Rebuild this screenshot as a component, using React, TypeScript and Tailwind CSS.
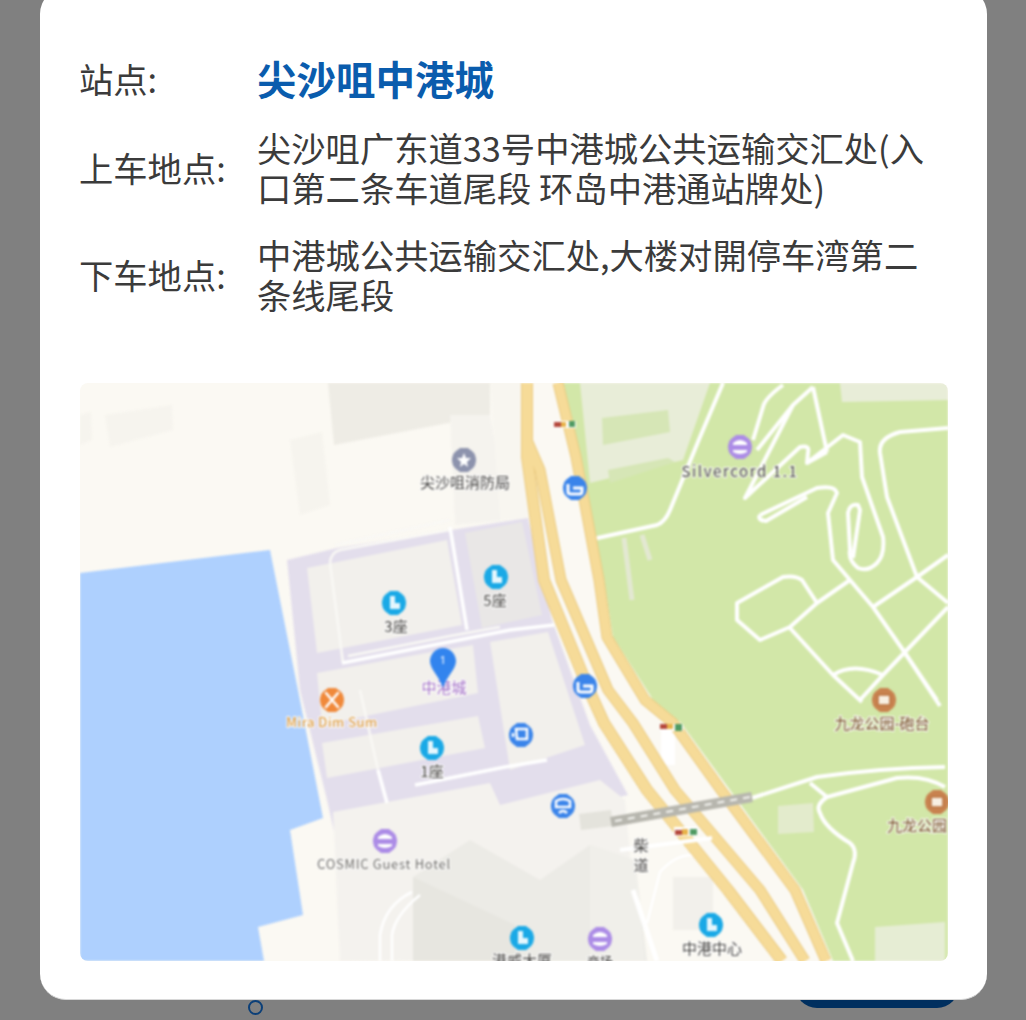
const cjk = "font-['Noto_Sans_CJK_SC','Noto_Sans',sans-serif]";

const rows = [
  {
    label: "上车地点:",
    value: "尖沙咀广东道33号中港城公共运输交汇处(入口第二条车道尾段 环岛中港通站牌处)",
  },
  {
    label: "下车地点:",
    value: "中港城公共运输交汇处,大楼对開停车湾第二条线尾段",
  },
];

const parkPaths = [
  "M723 383 L700 437 L670 510 Q665 522 657 525 L593 539",
  "M783 385 Q765 398 763 407 L753 440",
  "M813 387 L827 452",
  "M813 387 L793 405 L757 450",
  "M793 405 L745 498 L800 447 Q810 445 808 452 L807 463 L843 435 L860 442 L862 477 L883 537 Q885 555 877 563 Q868 572 858 568 Q848 560 850 550 L848 513 Q850 503 858 505 L860 510 L853 558",
  "M760 515 L817 488 Q835 485 837 493 L828 513 L833 560 L873 607 L903 650 L937 700",
  "M760 515 Q757 520 766 521 L807 497",
  "M827 452 L807 463",
  "M948 555 L917 577 L873 607",
  "M917 577 L948 603",
  "M948 607 L883 675 L860 700",
  "M948 428 L900 432 Q878 438 880 453 L887 497 L917 577",
  "M850 580 L817 603 L790 627 L760 640 L737 620 L737 603 L783 577 Q795 575 802 580 L817 603",
  "M790 628 L833 675 L862 702",
  "M833 675 Q853 662 883 675",
  "M903 650 L940 706",
  "M945 767 Q880 768 817 777 L752 798",
  "M945 787 Q925 775 897 778 L827 797 L810 783",
  "M827 797 Q815 805 820 813 Q825 828 850 843 Q858 850 853 863 L837 923 L853 961",
];

const buildingRoads = [
  "M342 663 L510 630 L554 625",
  "M450 527 L467 630",
  "M378 770 L387 803",
  "M415 785 L505 767 L547 760",
];

const paleRoads = [
  "M348 656 L450 636 L500 627",
  "M330 563 Q331 552 340 550 L450 530",
  "M330 563 L343 663",
  "M360 690 L378 770",
  "M335 545 L450 520",
];

const bands = [
  { d: "M527 383 L527 457 L544 580 L589 690 L604 723 L647 790 L728 890 L782 961", w: 11 },
  { d: "M527 440 L540 470 L561 580 L608 690 L633 723 L675 790 L760 890 L805 961", w: 10 },
  { d: "M558 383 L576 457 L599 580 L607 637 L645 700 L673 723 L721 790 L795 890 L826 961", w: 10 },
];

function Poi({
  x,
  y,
  fill,
  kind,
}: {
  x: number;
  y: number;
  fill: string;
  kind: "mall" | "bus" | "coach" | "hotel" | "metro" | "food" | "star" | "park";
}) {
  return (
    <g transform={`translate(${x} ${y})`}>
      <polygon
        points="-4,-12 4,-12 11,-5 11,5 4,12 -4,12 -11,5 -11,-5"
        fill={fill}
      />
      <circle r="12" fill={fill} />
      {kind === "mall" && (
        <path d="M-4 -7 H1 V0 H6 V6 H-4 Z" fill="#e4f6fd" />
      )}
      {kind === "bus" && (
        <path
          d="M-7 -4 V4 Q-7 6 -4 6 H5 Q7 6 7 3 V0 H-2"
          fill="none"
          stroke="#fff"
          strokeWidth="3"
        />
      )}
      {kind === "coach" && (
        <path
          d="M-5 -6 H6 V4 H-4 Z M-8 -2 V2"
          fill="none"
          stroke="#fff"
          strokeWidth="2.5"
        />
      )}
      {kind === "metro" && (
        <path
          d="M-7 -5 Q0 -9 7 -5 V1 H-7 Z M-4 7 Q0 3 4 7"
          fill="none"
          stroke="#fff"
          strokeWidth="2.5"
        />
      )}
      {kind === "hotel" && (
        <path
          d="M-7 -4 Q0 -10 7 -4 V-2 H-7 Z M-7 3 H7 V5 Q0 9 -7 5 Z"
          fill="#fff"
        />
      )}
      {kind === "food" && (
        <path
          d="M-6 -7 L6 7 M6 -7 L-6 7"
          stroke="#fff"
          strokeWidth="2.5"
          strokeLinecap="round"
        />
      )}
      {kind === "star" && (
        <polygon points="0,-7 2,-2 7,-2 3,2 4,7 0,4 -4,7 -3,2 -7,-2 -2,-2" fill="#fff" />
      )}
      {kind === "park" && (
        <rect x="-6" y="-5" width="12" height="10" rx="1" fill="#f8efe2" stroke="#b9733f" strokeWidth="1.5" />
      )}
    </g>
  );
}

function MapLabel({
  x,
  y,
  size = 15,
  fill = "#3f3d3a",
  children,
  spacing,
}: {
  x: number;
  y: number;
  size?: number;
  fill?: string;
  children: string;
  spacing?: number;
}) {
  return (
    <text
      x={x}
      y={y}
      fontSize={size}
      fill={fill}
      textAnchor="middle"
      letterSpacing={spacing}
      fontFamily="'Noto Sans CJK SC', 'Noto Sans', sans-serif"
      stroke="#ffffff"
      strokeWidth="2"
      paintOrder="stroke"
    >
      {children}
    </text>
  );
}

function MapView() {
  return (
    <svg
      viewBox="80 383 868 578"
      className="block w-[868px] h-[578px] rounded-lg bg-[#fbf9f3]"
    >
      <g className="blur-[0.8px]">
        {/* pale blocks, top left */}
        <polygon points="105,415 172,405 173,430 110,447" fill="#f6f4ee" />
        <polygon points="80,415 91,412 92,440 80,445" fill="#f6f4ee" />
        <polygon points="290,440 322,432 330,505 300,515" fill="#f6f4ee" />
        <polygon points="328,383 490,383 490,415 334,445" fill="#eeece5" />
        <polygon points="450,415 490,415 510,520 455,525" fill="#f5f3ee" />
        <polygon points="490,383 525,383 530,520 500,520" fill="#f8f6f0" />

        {/* water */}
        <polygon
          points="80,573 270,550 298,690 323,818 290,830 303,915 258,927 264,961 80,961"
          fill="#aed0fe"
        />

        {/* mall */}
        <polygon
          points="287,560 337,548 528,518 552,620 590,725 628,795 510,822 340,858 327,800 300,690"
          fill="#e3deec"
        />
        <polygon points="307,568 447,540 462,625 317,653" fill="#f2f0ec" />
        <polygon points="465,533 522,522 542,615 482,628" fill="#e9e7e6" />
        <polygon points="317,673 432,652 473,645 478,693 322,725" fill="#f2f0ec" />
        <polygon points="322,743 478,716 485,748 327,778" fill="#f2f0ec" />
        <polygon points="490,642 548,632 585,745 510,770" fill="#f2f0ec" />
        <polygon points="333,812 490,783 500,805 600,780 625,800 640,960 340,961" fill="#f4f2ee" />
        <polygon points="413,877 470,840 540,880 590,845 635,860 647,961 413,961" fill="#ecebe6" />
        <polygon points="413,877 515,925 515,961 413,961" fill="#e7e6e0" />
        <polygon points="590,845 635,860 645,961 590,961" fill="#f0efea" />
        <polygon points="673,877 713,877 713,930 673,930" fill="#f2f0eb" />

        {paleRoads.map((d) => (
          <path key={d} d={d} fill="none" stroke="#f9f8f5" strokeWidth="2.5" />
        ))}
        {buildingRoads.map((d) => (
          <path key={d} d={d} fill="none" stroke="#ffffff" strokeWidth="3.5" />
        ))}
        <path
          d="M380 961 V935 Q385 905 412 892 M392 961 V935 Q395 915 420 895"
          fill="none"
          stroke="#ffffff"
          strokeWidth="2.5"
        />
        <path d="M633 890 L657 961" fill="none" stroke="#ffffff" strokeWidth="5" />
        <path
          d="M700 857 Q680 850 660 872 L647 923"
          fill="none"
          stroke="#ffffff"
          strokeWidth="2.5"
        />

        {/* park */}
        <polygon
          points="563,383 948,383 948,961 833,961 803,890 730,790 681,723 653,700 613,637 604,580 580,457"
          fill="#d2e7a8"
        />
        <polygon points="580,383 710,383 683,460 590,483" fill="#e8edd8" />
        <polygon points="602,418 668,410 670,432 603,445" fill="#d6e6b6" />
        <polygon points="608,470 668,458 675,462 610,483" fill="#d6e6b6" />
        <polygon points="840,383 948,383 948,400 842,402" fill="#e8edd8" />
        <polygon points="778,806 813,803 814,832 778,834" fill="#e3ebcc" />
        <polygon points="875,927 945,922 945,961 875,961" fill="#e6edd4" />
        <path d="M624 538 L632 600 M642 535 L650 560" stroke="#e3e8d2" strokeWidth="5" fill="none" />
        {parkPaths.map((d) => (
          <path key={d} d={d} fill="none" stroke="#ffffff" strokeWidth="4" strokeLinejoin="round" />
        ))}

        {/* expressway */}
        <polygon
          points="527,383 558,383 576,457 599,580 607,637 645,700 673,723 721,790 795,890 826,961 782,961 728,890 647,790 604,723 589,690 544,580 527,457"
          fill="#fbf9f3"
        />
        <path d="M668 730 V765" stroke="#ffffff" strokeWidth="14" fill="none" />
        {bands.map((b) => (
          <path key={b.d} d={b.d} fill="none" stroke="#ebcb82" strokeWidth={b.w + 1} strokeLinejoin="round" />
        ))}
        {bands.map((b) => (
          <path key={b.d} d={b.d} fill="none" stroke="#f6db98" strokeWidth={b.w - 1} strokeLinejoin="round" />
        ))}

        {/* footbridge */}
        <path d="M580 822 L612 818" stroke="#e4e3dc" strokeWidth="16" />
        <path d="M611 822 L752 797" stroke="#b7b6ae" strokeWidth="10" />
        <path d="M615 821 L750 797" stroke="#f4f4f0" strokeWidth="2" strokeDasharray="7 6" />
        <path d="M620 850 L712 838" stroke="#ffffff" strokeWidth="4" fill="none" />

        {/* traffic markers */}
        <rect x="553" y="421" width="23" height="7" fill="#ffffff" />
        <rect x="554" y="422" width="7" height="5" fill="#b4483c" />
        <rect x="561" y="422" width="5" height="5" fill="#e8b34a" />
        <rect x="569" y="421" width="6" height="6" fill="#4f9a62" />
        <rect x="660" y="724" width="23" height="7" fill="#ffffff" />
        <rect x="660" y="724" width="7" height="5" fill="#b4483c" />
        <rect x="667" y="724" width="6" height="5" fill="#e8b34a" />
        <rect x="675" y="724" width="7" height="7" fill="#4f9a62" />
        <rect x="674" y="827" width="24" height="9" fill="#ffffff" />
        <rect x="675" y="830" width="7" height="5" fill="#b4483c" />
        <rect x="682" y="829" width="6" height="6" fill="#e8b34a" />
        <rect x="690" y="829" width="7" height="6" fill="#4f9a62" />
      </g>

      <g className="blur-[0.8px]">
        <Poi x={464} y={460} fill="#8d93ad" kind="star" />
        <Poi x={575} y={488} fill="#3a84ea" kind="bus" />
        <Poi x={740} y={447} fill="#ac8ce6" kind="hotel" />
        <Poi x={496} y={577} fill="#1aa9e6" kind="mall" />
        <Poi x={394} y={603} fill="#1aa9e6" kind="mall" />
        <Poi x={585} y={686} fill="#3a84ea" kind="bus" />
        <Poi x={332} y={700} fill="#f0893a" kind="food" />
        <Poi x={432} y={748} fill="#1aa9e6" kind="mall" />
        <Poi x={521} y={735} fill="#3a84ea" kind="coach" />
        <Poi x={563} y={806} fill="#3a84ea" kind="metro" />
        <Poi x={385} y={841} fill="#ac8ce6" kind="hotel" />
        <Poi x={522} y={938} fill="#1aa9e6" kind="mall" />
        <Poi x={600} y={939} fill="#ac8ce6" kind="hotel" />
        <Poi x={711} y={925} fill="#1aa9e6" kind="mall" />
        <Poi x={884} y={700} fill="#c8824f" kind="park" />
        <Poi x={937} y={802} fill="#c8824f" kind="park" />

        <MapLabel x={465} y={488}>尖沙咀消防局</MapLabel>
        <MapLabel x={740} y={477} spacing={1.6}>Silvercord 1.1</MapLabel>
        <MapLabel x={495} y={606}>5座</MapLabel>
        <MapLabel x={396} y={632}>3座</MapLabel>
        <MapLabel x={444} y={693} fill="#a06cc4">中港城</MapLabel>
        <MapLabel x={332} y={727} size={13} fill="#d68a1f" spacing={0.6}>Mira Dim Sum</MapLabel>
        <MapLabel x={432} y={777}>1座</MapLabel>
        <MapLabel x={384} y={869} size={13} fill="#66645f" spacing={0.7}>COSMIC Guest Hotel</MapLabel>
        <MapLabel x={641} y={851}>柴</MapLabel>
        <MapLabel x={641} y={871}>道</MapLabel>
        <MapLabel x={712} y={954}>中港中心</MapLabel>
        <MapLabel x={522} y={966}>港威大厦</MapLabel>
        <MapLabel x={600} y={966} size={13}>商场</MapLabel>
        <MapLabel x={882} y={729} fill="#6e4519">九龙公园-砲台</MapLabel>
        <MapLabel x={917} y={831} fill="#6e4519">九龙公园</MapLabel>

        {/* selected stop */}
        <path
          d="M443 648 C435 648 430 655 430 661 C430 669 439 676 443 688 C447 676 456 669 456 661 C456 655 451 648 443 648 Z"
          fill="#3284ee"
        />
        <text x={443} y={664} fontSize={11} fill="#ffffff" textAnchor="middle" fontFamily="'Noto Sans', sans-serif">
          1
        </text>
      </g>
    </svg>
  );
}

export default function App() {
  return (
    <div className={`relative h-[1020px] w-[1026px] overflow-hidden bg-[#808080] ${cjk}`}>
      {/* page behind the dialog */}
      <div className="absolute left-[248px] top-[1000px] size-[15px] rounded-full border-[2.5px] border-[#0b3f78]" />
      <div className="absolute left-[795px] top-[960px] h-[48px] w-[164px] rounded-b-[22px] bg-[#002f5f]" />

      <div className="relative ml-[40px] -mt-[12px] h-[1012px] w-[947px] rounded-[26px] bg-white px-[40px] pt-[66px] border-b border-[#d8d8d8]">
        <div className="-ml-px flex items-center h-[48px]">
          <span className="w-[178px] shrink-0 text-[34.3px] leading-[48px] text-[#3b3b3b]">站点:</span>
          <span className="text-[39.5px] leading-[48px] font-bold text-[#0a5cad]">尖沙咀中港城</span>
        </div>

        <div className="-ml-px mt-[25px] flex flex-col gap-[27px]">
          {rows.map((row) => (
            <div key={row.label} className="flex items-center">
              <span className="w-[178px] shrink-0 text-[34.3px] leading-[40px] text-[#3b3b3b]">
                {row.label}
              </span>
              <span className="w-[680px] text-[34.3px] leading-[40px] text-[#3b3b3b]">
                {row.value}
              </span>
            </div>
          ))}
        </div>

        <div className="mt-[69px]">
          <MapView />
        </div>
      </div>
    </div>
  );
}
